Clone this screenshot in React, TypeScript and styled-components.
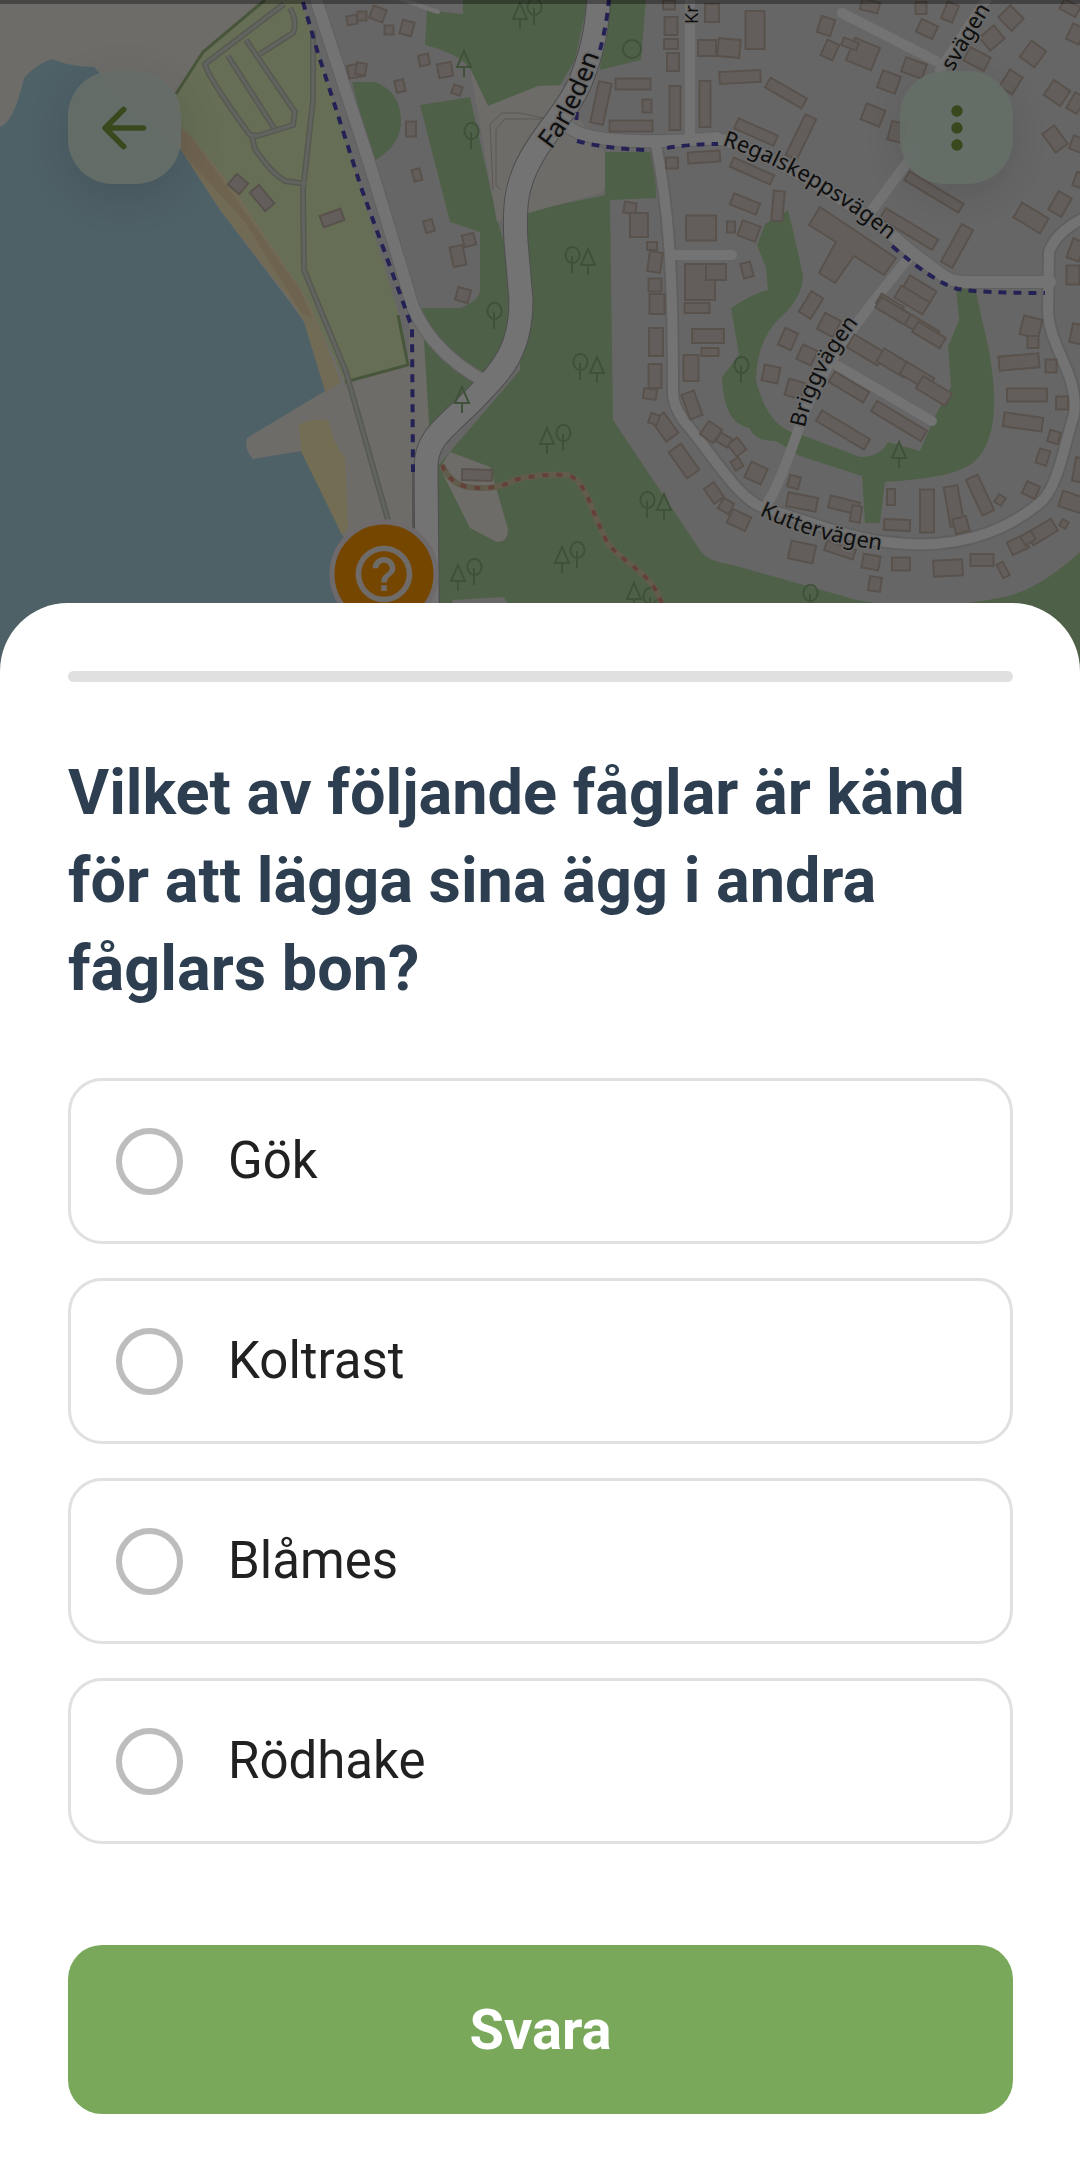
import React, { useState } from "react";
import styled, { createGlobalStyle } from "styled-components";
import { MdHelpOutline, MdMoreVert } from "react-icons/md";

const GlobalStyle = createGlobalStyle`
  *, *::before, *::after { box-sizing: border-box; }
  body { margin: 0; background: #ffffff; font-family: Roboto, "Noto Sans", sans-serif; }
`;

const Screen = styled.main`
  position: relative;
  display: flex;
  flex-direction: column;
  min-height: 100vh;
  overflow: hidden;
  isolation: isolate;
`;

const MapLayer = styled.svg`
  position: absolute;
  top: 0;
  left: 0;
  z-index: -1;
  width: 100%;
  height: 720px;
  background: #e0dfdf;
`;

const MapArea = styled.div`
  position: relative;
  flex: 1 0 200px;
  margin-bottom: -68px;
  padding-bottom: 68px;
`;

const TopBar = styled.header`
  display: flex;
  justify-content: space-between;
  padding: 71px 67px 0 68px;
`;

const MapButton = styled.button`
  display: grid;
  place-items: center;
  width: 113px;
  height: 113px;
  padding: 0;
  border: 0;
  border-radius: 45px;
  background: rgba(220, 238, 225, 0.9);
  color: #7ba140;
  box-shadow: 0 11px 45px rgba(0, 0, 0, 0.12);
  cursor: pointer;
`;

const Scrim = styled.div`
  position: absolute;
  inset: 0;
  border-top: 4px solid rgba(0, 0, 0, 0.35);
  background: rgba(0, 0, 0, 0.54);
  pointer-events: none;
`;

const Sheet = styled.section`
  position: relative;
  padding: 68px 67px 63px 68px;
  border-radius: 68px 68px 0 0;
  background: #ffffff;
`;

const Progress = styled.progress`
  appearance: none;
  display: block;
  width: 100%;
  height: 11px;
  border: 0;
  border-radius: 6px;
  background: #e0e0e0;
  overflow: hidden;
  &::-webkit-progress-bar { background: #e0e0e0; }
  &::-webkit-progress-value { background: #79a85b; }
`;

const Question = styled.h1`
  margin: 67px 0 65px;
  color: #2c3e50;
  font-size: 63px;
  font-weight: 700;
  line-height: 88px;
`;

const Options = styled.div`
  display: flex;
  flex-direction: column;
  gap: 34px;
`;

const Option = styled.label`
  display: flex;
  align-items: center;
  gap: 45px;
  height: 166px;
  padding: 0 45px;
  border: 3px solid #e0e0e0;
  border-radius: 34px;
  color: #212121;
  font-size: 51px;
  line-height: 60px;
  cursor: pointer;
`;

const Radio = styled.input`
  appearance: none;
  flex: none;
  width: 67px;
  height: 67px;
  margin: 0;
  border: 6px solid #bdbdbd;
  border-radius: 50%;
  cursor: pointer;
  &:checked {
    border-color: #79a85b;
    background: radial-gradient(#79a85b 50%, transparent 52%);
  }
`;

const SubmitButton = styled.button`
  display: block;
  width: 100%;
  height: 169px;
  margin-top: 101px;
  border: 0;
  border-radius: 34px;
  background: #79a85b;
  color: #ffffff;
  font: 700 56px/68px Roboto, "Noto Sans", sans-serif;
  cursor: pointer;
`;

const Street = styled.text<{ $size?: number }>`
  fill: #222222;
  stroke: #e6e6e6;
  stroke-width: 3px;
  stroke-linejoin: round;
  paint-order: stroke;
  font-family: "Noto Sans", sans-serif;
  font-size: ${({ $size = 22 }) => $size}px;
`;

type Building = [cx: number, cy: number, w: number, h: number, angle?: number];

const buildings: Building[] = [
  [238, 184, 15, 14, 40], [262, 198, 24, 12, 50], [332, 218, 22, 12, -20],
  [352, 20, 10, 9, -10], [355, 71, 14, 13, -10], [378, 14, 14, 13, 20], [389, 30, 9, 9], [407, 28, 12, 14, 15],
  [424, 60, 10, 11, -10], [445, 70, 14, 14, -10], [457, 90, 9, 9, 20], [400, 86, 9, 12, -12],
  [411, 129, 10, 15], [417, 175, 8, 12, -15], [429, 226, 9, 12, -15], [469, 240, 12, 12, -15], [458, 256, 13, 20, -12],
  [463, 295, 13, 13, 15], [361, 69, 10, 12, 10], [362, 16, 9, 9],
  [601, 103, 13, 42, 12], [633, 84, 35, 11], [631, 126, 43, 11], [647, 106, 9, 13], [675, 108, 11, 44], [705, 104, 11, 46],
  [671, 26, 13, 18], [671, 44, 14, 10], [673, 62, 12, 18], [669, 5, 12, 9], [707, 48, 18, 16], [712, 13, 14, 18],
  [704, 157, 32, 11, -4], [672, 163, 12, 11], [630, 208, 12, 11, 10], [639, 225, 18, 24], [652, 246, 10, 8], [655, 262, 13, 20, 8],
  [701, 228, 30, 25], [655, 285, 13, 13], [657, 304, 15, 20], [700, 282, 30, 36], [716, 272, 20, 16],
  [656, 342, 14, 28], [655, 376, 13, 24], [650, 394, 13, 10, 8], [691, 368, 15, 26], [708, 336, 32, 14], [710, 352, 17, 8], [697, 308, 25, 10],
  [755, 30, 19, 38], [729, 48, 22, 18, 5], [740, 77, 41, 12, -3], [786, 93, 42, 11, 30], [756, 132, 43, 11, 24], [801, 137, 12, 45, 26],
  [752, 171, 44, 10, 24], [745, 204, 28, 12, 22], [778, 206, 11, 30, 5], [749, 231, 19, 16, 20], [731, 227, 8, 11], [747, 270, 10, 15, -15],
  [826, 26, 14, 17, 18], [863, 54, 27, 24, 22], [850, 44, 16, 8, 20], [830, 50, 13, 17, 25], [870, 6, 18, 11, 15], [889, 82, 19, 18, 20], [914, 68, 22, 15, 20],
  [873, 115, 20, 17, 22], [897, 132, 15, 19, 15], [927, 29, 18, 14, 25], [921, 8, 11, 12], [950, 12, 12, 18, 22],
  [1011, 18, 17, 19, -45], [992, 38, 19, 17, -40], [977, 59, 23, 15, 28], [1033, 54, 18, 20, 36], [1011, 82, 15, 20, 32], [1057, 93, 20, 18, 34],
  [1055, 139, 15, 23, -36], [1070, 8, 18, 11, 28], [1076, 34, 14, 17, 25], [1076, 103, 12, 18, 30], [1077, 144, 12, 14, 20], [1079, 180, 9, 14, 20],
  [934, 192, 63, 10, 31], [909, 229, 61, 12, 31], [957, 246, 13, 43, 29], [1031, 218, 31, 17, 31], [1060, 204, 15, 21, 30],
  [920, 289, 31, 13, 31], [912, 300, 33, 14, 31], [890, 305, 26, 11, 31], [1076, 250, 13, 20, 20], [1073, 275, 13, 19],
  [811, 305, 14, 24, 32], [829, 325, 18, 18, 28], [788, 339, 14, 18, 24], [807, 355, 16, 16, 25], [771, 374, 16, 16, 12], [795, 389, 17, 17, 17],
  [866, 350, 36, 15, 31], [894, 363, 32, 15, 31], [917, 376, 32, 14, 31], [934, 391, 34, 14, 31], [849, 387, 40, 12, 31], [843, 430, 56, 12, 31], [899, 421, 58, 12, 31],
  [917, 325, 45, 12, 31], [929, 335, 32, 12, 31], [893, 311, 34, 12, 31],
  [1031, 327, 19, 19, 14], [1033, 342, 11, 12], [1019, 362, 40, 14, -5], [1027, 395, 40, 13], [1023, 422, 39, 14, 8], [1051, 366, 11, 13], [1062, 403, 12, 13], [1054, 437, 11, 12, 15],
  [1043, 457, 11, 15, 18], [1031, 490, 14, 13, 25], [1078, 334, 14, 19, 12], [1080, 470, 12, 24, 10], [1075, 503, 30, 16, 18], [1064, 524, 7, 7, 30],
  [1042, 532, 29, 14, -31], [1018, 545, 18, 14, -25], [1028, 538, 12, 10, -31],
  [692, 405, 13, 26, -20], [711, 432, 16, 16, 35], [665, 427, 15, 25, -36], [684, 461, 15, 32, -35], [654, 419, 9, 10, 20], [714, 493, 12, 18, -35],
  [737, 447, 12, 15, -38], [737, 464, 9, 10, -30], [756, 473, 18, 17, 25], [724, 440, 13, 10, 30], [794, 482, 11, 12, 15], [802, 502, 30, 14, 11],
  [844, 505, 30, 12, 14], [856, 514, 10, 16, 10], [891, 497, 8, 16], [897, 525, 26, 11, 3], [927, 511, 14, 43], [954, 506, 14, 40, -10], [961, 525, 14, 15, -15],
  [980, 495, 13, 39, -25], [1000, 500, 8, 9, 35], [739, 520, 20, 15, 25], [726, 506, 12, 12, 30], [802, 552, 25, 18, 12], [840, 550, 30, 10, 18], [871, 562, 17, 14, 10], [875, 584, 12, 14, 8],
  [901, 564, 18, 13], [948, 568, 29, 16, -3], [982, 560, 23, 12], [1003, 570, 7, 15, -28],
  [477, 475, 30, 11, 2],
];

const trees: [number, number][] = [
  [534, 8], [520, 12], [471, 132], [464, 60], [572, 256], [588, 258], [494, 312], [462, 396], [580, 363], [597, 366],
  [563, 434], [547, 437], [647, 501], [664, 503], [577, 551], [562, 556], [474, 568], [458, 574], [650, 597], [634, 592],
  [741, 366], [899, 451], [810, 594],
];

const roads = {
  farleden: "M599 -10C598 28 592 53 581 80C570 108 545 132 531 158C516 185 514 206 516 242L521 300C521 353 500 372 473 400C445 428 426 438 426 467L428 700",
  coast: "M313 -10L370 165L408 290C416 327 445 361 488 383",
  regal: "M570 128C588 142 648 144 716 138C764 150 858 204 909 250L938 272Q950 282 964 282L1050 282",
  kutter: "M656 145C668 205 673 265 673 390Q672 404 684 421C714 456 739 501 765 508C810 522 853 540 895 543C969 551 1017 523 1043 500C1059 482 1064 446 1074 415C1080 375 1048 347 1048 309L1049 252Q1056 232 1084 218",
};

const footpath = "M442 465Q450 484 468 487Q495 491 515 480Q535 474 568 475C586 481 591 510 602 531C612 562 652 567 662 605";
const campPaths = "M284 4L205 64Q207 76 250 135L257 136L293 125L295 112L246 40M228 56L274 128M260 54L293 33Q298 22 290 8M252 137L255 149Q270 172 285 181L307 184M313 30L313 100L303 190L304 270L346 372L388 520";

function CityMap() {
  return (
    <MapLayer viewBox="0 0 1080 720" preserveAspectRatio="xMidYMin slice" role="img" aria-label="Karta">
      <defs>
        <path id="farleden-label" d="M551 150C570 127 583 98 592 76L612 20" />
        <path id="regal-label" d="M722 145C790 168 850 206 915 262" />
        <path id="brigg-label" d="M805 428C814 382 840 345 876 300" />
        <path id="kutter-label" d="M759 515C798 534 844 548 910 553" />
        <path id="north-label" d="M953 72L1003 -12" />
      </defs>
      <rect width="1080" height="720" fill="#e0dfdf" />
      <path d="M0 0H268L176 94L181 128L312 310L345 382L408 365L410 315L424 340L431 430L432 720H0Z" fill="#efebe4" />
      <g fill="#add19e">
        <path d="M463 0H588L575 60L560 85L540 86L488 106L470 70Q463 55 425 45L427 10L463 14Z" />
        <path d="M607 0H646L641 60L600 70Z" />
        <path d="M352 82H375Q402 92 401 124Q399 148 372 162Z" />
        <path d="M420 105L470 97L498 222L520 300L500 380L430 440L422 308L460 308Q480 300 480 290V232L450 222Z" />
        <path d="M520 213L605 195V152H655L656 198L610 200L613 420L702 553Q711 562 729 564L857 600Q930 614 1008 596Q1040 588 1080 552V720H435L436 468L520 370Z" />
        <path d="M788 210L793 230L803 275Q804 296 780 318Q757 340 756 380Q768 430 802 435L860 457Q880 457 888 442L920 451L935 416L951 387L948 347L959 320L956 288H975L989 350Q1004 435 975 461Q958 478 885 482L880 523H865L862 476L800 456L776 441Q756 442 749 428Q723 423 722 377L739 355L731 308Q754 293 768 290L766 268L757 245L765 224Z" />
      </g>
      <path d="M470 68L488 106L538 86L563 86L590 138L605 152V188L600 193L528 213L497 222Z" fill="#efebe4" />
      <path d="M450 452L490 467L508 529Q508 542 497 542L470 528L440 468Z" fill="#efebe4" />
      <path d="M453 600L504 597L510 610H450Z" fill="#e5e1de" />
      <path d="M265 0L203 52L176 94L181 128L220 180L312 310L345 382L408 365L400 318L330 90L301 0Z" fill="#def0bb" />
      <path d="M265 0L203 52L176 94M345 382L408 365L398 315" fill="none" stroke="#9cba80" strokeWidth="3" />
      <path d="M181 128L191 136L235 190L308 300L321 330L341 383L325 392L303 320Q295 304 278 284L220 210L181 151Z" fill="#f7e6b8" />
      <path d="M181 128L191 136L300 290L312 318L301 312L245 222L181 151Z" fill="#edd0a8" opacity=".7" />
      <path d="M0 127Q14 122 24 78Q36 64 52 59Q72 67 94 67L115 90L181 150L220 210L290 302L304 322L325 391L247 438Q244 450 253 459L301 451L319 486L344 538L352 720H0Z" fill="#aad3df" />
      <path d="M299 425Q310 418 329 421Q330 437 345 458L348 528L342 535L301 451Z" fill="#fbedb7" />
      <path d={campPaths} fill="none" stroke="#bcc3b0" strokeWidth="6" />
      <path d={campPaths} fill="none" stroke="#d6d9d0" strokeWidth="3" />
      <path d="M548 119L520 113H502L490 124L493 190M501 190L496 185L496 129L505 119H545" fill="none" stroke="#c9bbb7" strokeWidth="1" />
      <path d={roads.farleden} fill="none" stroke="#a8a8a8" strokeWidth="25" />
      <g fill="none" stroke="#d2d0d0" strokeWidth="14">
        <path d={roads.coast} />
        <path d={roads.regal} />
        <path d={roads.kutter} />
      </g>
      <path d="M413 470V540" stroke="#b9b4ac" strokeWidth="2" />
      <g fill="none" stroke="#fafafa" strokeLinecap="round">
        <path d={roads.farleden} strokeWidth="23" />
        <path d={roads.coast} strokeWidth="12" />
        <path d={roads.regal} strokeWidth="12" />
        <path d={roads.kutter} strokeWidth="10" />
        <path d="M690 0V136M674 255H732" strokeWidth="10" />
        <path d="M768 502Q778 488 799 428C816 374 857 320 912 254M870 213L914 153" strokeWidth="10" />
        <path d="M838 366L932 421M842 13L936 61M940 70L990 -6" strokeWidth="10" />
        <path d="M362 -4V-2M395 -3L438 12" strokeWidth="4" />
      </g>
      <g fill="#d8cec7" stroke="#c2b1a6" strokeWidth="2">
        {buildings.map(([cx, cy, w, h, angle = 0], i) => (
          <rect key={i} x={cx - w / 2} y={cy - h / 2} width={w} height={h} transform={`rotate(${angle} ${cx} ${cy})`} />
        ))}
        <path d="M820 207L896 258L884 275L854 256L835 283L819 273L836 242L809 225Z" />
      </g>
      <g fill="none" stroke="#8cb180" strokeWidth="2">
        {trees.map(([x, y], i) =>
          i % 2 ? (
            <path key={i} d={`M${x - 7} ${y + 7}L${x} ${y - 9}L${x + 7} ${y + 7}ZM${x} ${y + 7}V${y + 17}`} />
          ) : (
            <path key={i} d={`M${x} ${y + 7}a7 8 0 1 1 1 0M${x} ${y}V${y + 17}`} />
          ),
        )}
        <circle cx="632" cy="49" r="9" />
      </g>
      <path d={footpath} fill="none" stroke="#d3c8a4" strokeWidth="6" />
      <path d={footpath} fill="none" stroke="#d98d80" strokeWidth="4" strokeDasharray="6 8" />
      <g fill="none" stroke="#5049b8" strokeWidth="4" strokeDasharray="8 7">
        <path d="M303 2L317 50L362 190L403 302L412 328L413 472" />
        <path d="M609 -2Q607 24 600 50M577 112L576 124M577 141Q607 149 647 150M667 148Q690 144 718 144M892 246Q935 283 958 289Q980 293 1045 293" />
      </g>
      <Street $size={26}><textPath href="#farleden-label">Farleden</textPath></Street>
      <Street><textPath href="#regal-label">Regalskeppsvägen</textPath></Street>
      <Street><textPath href="#brigg-label">Briggvägen</textPath></Street>
      <Street><textPath href="#kutter-label">Kuttervägen</textPath></Street>
      <Street><textPath href="#north-label">svägen</textPath></Street>
      <Street $size={18} transform="translate(698 24) rotate(-90)">Kr</Street>
      <circle cx="384" cy="574" r="52" fill="#ff9800" stroke="#efe8ea" strokeWidth="5" />
      <g transform="translate(350 540)">
        <MdHelpOutline size={68} color="#f2e9e4" />
      </g>
    </MapLayer>
  );
}

const answers = ["Gök", "Koltrast", "Blåmes", "Rödhake"];

export default function App() {
  const [answer, setAnswer] = useState("");
  return (
    <>
      <GlobalStyle />
      <Screen>
        <CityMap />
        <MapArea>
          <TopBar>
            <MapButton type="button" aria-label="Tillbaka">
              <svg width="68" height="68" viewBox="0 0 24 24" fill="none" stroke="currentColor" strokeWidth="2" strokeLinecap="round" strokeLinejoin="round">
                <path d="M18.5 12H5M11.5 5.5L5 12L11.5 18.5" />
              </svg>
            </MapButton>
            <MapButton type="button" aria-label="Fler alternativ">
              <MdMoreVert size={68} />
            </MapButton>
          </TopBar>
          <Scrim />
        </MapArea>
        <Sheet>
          <Progress value={0} max={1} aria-label="Förlopp" />
          <form onSubmit={(event) => event.preventDefault()}>
            <Question id="question">Vilket av följande fåglar är känd för att lägga sina ägg i andra fåglars bon?</Question>
            <Options role="radiogroup" aria-labelledby="question">
              {answers.map((name) => (
                <Option key={name}>
                  <Radio type="radio" name="answer" value={name} checked={answer === name} onChange={() => setAnswer(name)} />
                  {name}
                </Option>
              ))}
            </Options>
            <SubmitButton type="submit">Svara</SubmitButton>
          </form>
        </Sheet>
      </Screen>
    </>
  );
}
